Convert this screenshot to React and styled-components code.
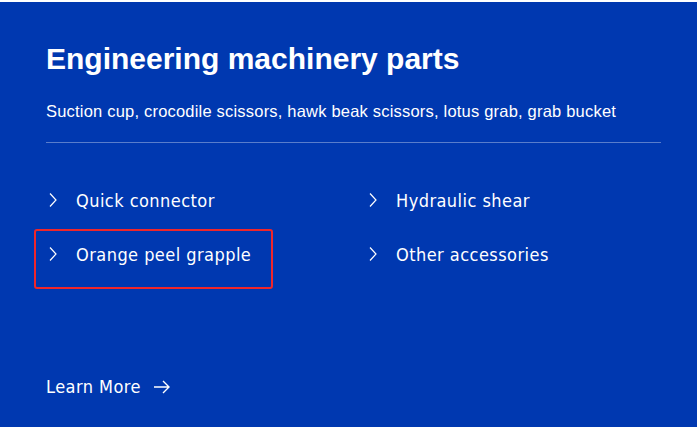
import styled, { createGlobalStyle } from "styled-components";

const GlobalStyle = createGlobalStyle`
    html, body {
        margin : 0;
        padding : 0;
        background : #ffffff;
    }
    *, *::before, *::after {
        box-sizing : border-box;
    }
`;

const Panel = styled.section`
    margin-top : 2px;
    height : 425px;
    background : #0038b0;
    color : #ffffff;
    padding : 37px 36px 0 46px;
    display : flex;
    flex-direction : column;
    font-family : "Liberation Sans", Arial, sans-serif;
`;

const Title = styled.h2`
    margin : 0;
    font-size : 30px;
    line-height : 40px;
    font-weight : 700;
`;

const Desc = styled.p`
    margin : 20px 0 0;
    font-size : 16.5px;
    line-height : 24px;
    letter-spacing : 0.2px;
`;

const Divider = styled.hr`
    margin : 19px 0 0;
    border : none;
    height : 1px;
    background : rgba(255, 255, 255, 0.35);
`;

const List = styled.ul`
    margin : 30px 0 0 -12px;
    padding : 0;
    list-style : none;
    display : grid;
    grid-template-columns : 320px 1fr;
`;

const Item = styled.li`
    position : relative;
    display : flex;
    align-items : center;
    gap : 18px;
    height : ${props => props.$tall ? "60px" : "56px"};
    padding : ${props => props.$tall ? "0 14px 10px" : "0 14px 2px"};
    font-family : "DejaVu Sans Condensed", "Liberation Sans", sans-serif;
    font-size : 18px;
    letter-spacing : 0.45px;

    ${props => props.$marked && `
        &::after {
            content : "";
            position : absolute;
            inset : 0 auto 0 0;
            width : 239px;
            border : 2px solid #f0262a;
            border-radius : 3px;
        }
    `}
`;

const Chevron = () => (
    <svg width="10" height="16" viewBox="0 0 10 16" fill="none">
        <path d="M2 1.5 L8 8 L2 14.5" stroke="#ffffff" strokeWidth="1.2" />
    </svg>
);

const LearnMore = styled.a`
    margin-top : auto;
    margin-bottom : 30px;
    display : flex;
    align-items : center;
    gap : 12px;
    color : #ffffff;
    text-decoration : none;
    font-family : "DejaVu Sans Condensed", "Liberation Sans", sans-serif;
    font-size : 18px;
    letter-spacing : 0.45px;
`;

const Arrow = () => (
    <svg width="18" height="14" viewBox="0 0 18 14" fill="none">
        <path d="M1 7 H16 M10 1 L16 7 L10 13" stroke="#ffffff" strokeWidth="1.4" />
    </svg>
);

const App = () => {
    return (
        <>
            <GlobalStyle />
            <Panel>
                <Title>Engineering machinery parts</Title>
                <Desc>Suction cup, crocodile scissors, hawk beak scissors, lotus grab, grab bucket</Desc>
                <Divider />
                <List>
                    <Item><Chevron />Quick connector</Item>
                    <Item><Chevron />Hydraulic shear</Item>
                    <Item $tall $marked><Chevron />Orange peel grapple</Item>
                    <Item $tall><Chevron />Other accessories</Item>
                </List>
                <LearnMore href="#">Learn More <Arrow /></LearnMore>
            </Panel>
        </>
    )
}

export default App
